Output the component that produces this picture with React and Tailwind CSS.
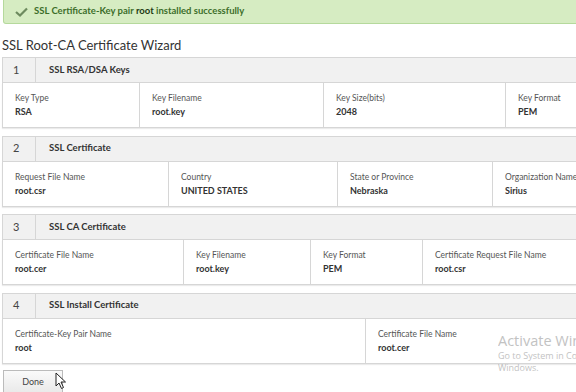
import React from "react";

const sections = [
  {
    num: "1",
    title: "SSL RSA/DSA Keys",
    cols: "grid-cols-[137px_184px_182px_120px]",
    fields: [
      ["Key Type", "RSA"],
      ["Key Filename", "root.key"],
      ["Key Size(bits)", "2048"],
      ["Key Format", "PEM"],
    ],
  },
  {
    num: "2",
    title: "SSL Certificate",
    cols: "grid-cols-[166px_169px_155px_130px]",
    fields: [
      ["Request File Name", "root.csr"],
      ["Country", "UNITED STATES"],
      ["State or Province", "Nebraska"],
      ["Organization Name", "Sirius"],
    ],
  },
  {
    num: "3",
    title: "SSL CA Certificate",
    cols: "grid-cols-[181px_127px_112px_200px]",
    fields: [
      ["Certificate File Name", "root.cer"],
      ["Key Filename", "root.key"],
      ["Key Format", "PEM"],
      ["Certificate Request File Name", "root.csr"],
    ],
  },
  {
    num: "4",
    title: "SSL Install Certificate",
    cols: "grid-cols-[363px_257px]",
    fields: [
      ["Certificate-Key Pair Name", "root"],
      ["Certificate File Name", "root.cer"],
    ],
  },
];

function Section({ num, title, cols, fields }) {
  return (
    <div className="w-[620px]">
      <div className="flex h-[26px] items-stretch border border-[#d6d6d6] bg-[#f1f1f1]">
        <div className="flex w-[33px] items-center pl-[10px] text-[11px] text-[#444] border-r border-[#d6d6d6]">
          {num}
        </div>
        <div className="flex items-center pl-[13px] text-[9.5px] font-bold text-[#333]">{title}</div>
      </div>
      <div className={`grid h-[45px] ${cols} border border-t-0 border-[#d6d6d6] bg-white shadow-[0_1px_1px_rgba(0,0,0,0.08)]`}>
        {fields.map(([label, value]) => (
          <div key={label} className="flex flex-col pl-[12px] pt-[9px] border-r border-[#d6d6d6]">
            <span className="text-[8.5px] leading-[12px] text-[#555]">{label}</span>
            <span className="mt-[2px] text-[9px] leading-[12px] font-bold text-[#333]">{value}</span>
          </div>
        ))}
      </div>
    </div>
  );
}

export default function App() {
  return (
    <div className="relative h-[392px] w-[576px] overflow-hidden bg-white font-['Lato',sans-serif]">
      <div className="ml-[3px] flex h-[24px] w-[600px] items-center rounded-b-[3px] border border-t-0 border-[#b5d99c] bg-[#d6ecc2] pl-[11px]">
        <svg width="13" height="10" viewBox="0 0 13 10" className="mr-[6px]">
          <path d="M1 5 L5 8.5 L12 1.5" fill="none" stroke="#6d8a5e" strokeWidth="2.2" />
        </svg>
        <span className="text-[9.5px] font-bold text-[#3c6e2a]">
          SSL Certificate-Key pair <span className="text-[#1f3a14]">root</span> installed successfully
        </span>
      </div>
      <div className="ml-[2px] mt-[12px] text-[13px] leading-[18px] text-[#333]">SSL Root-CA Certificate Wizard</div>
      <div className="ml-[2px] mt-[3px] flex flex-col gap-[7.5px]">
        {sections.map((s) => (
          <Section key={s.num} {...s} />
        ))}
      </div>
      <button className="ml-[3px] mt-[6px] h-[24px] w-[60px] border border-[#bbb] bg-gradient-to-b from-[#fafafa] to-[#e9e9e9] text-[9px] text-[#444]">
        Done
      </button>
      <svg className="absolute left-[55px] top-[372px]" width="12" height="18" viewBox="0 0 12 18">
        <path d="M1 1 L1 14 L4 11 L6.5 16.5 L8.5 15.5 L6 10 L10.5 10 Z" fill="#fff" stroke="#222" strokeWidth="1" />
      </svg>
      <div className="pointer-events-none absolute left-[498px] top-[332px] text-[#9a9a9a] opacity-60">
        <div className="whitespace-nowrap text-[14.5px] leading-[18px] font-['Open_Sans',sans-serif]">Activate Windows</div>
        <div className="whitespace-nowrap text-[9px] leading-[12px] font-['Open_Sans',sans-serif]">Go to System in Control Panel to activate</div>
        <div className="whitespace-nowrap text-[9px] leading-[12px] font-['Open_Sans',sans-serif]">Windows.</div>
      </div>
    </div>
  );
}
